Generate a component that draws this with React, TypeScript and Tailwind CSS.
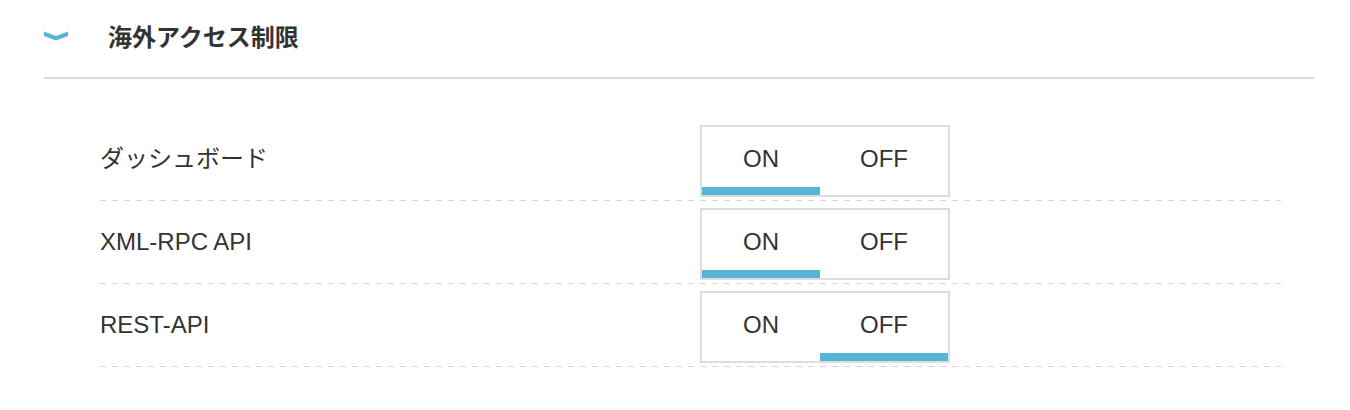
const font = { fontFamily: '"Liberation Sans", "Noto Sans CJK JP", sans-serif' };

type Row = { label: string; on: boolean };

// アクセス制限の行
const rows: Row[] = [
  { label: 'ダッシュボード', on: true },
  { label: 'XML-RPC API', on: true },
  { label: 'REST-API', on: false },
];

function Toggle({ on }: { on: boolean }) {
  return (
    <div className="flex h-[72px] w-[250px] border-2 border-[#dddddd] bg-white">
      <div
        className={
          'flex w-[118px] items-center justify-center border-b-[8px] pt-[4px] text-[24px] leading-none text-[#333333] ' +
          (on ? 'border-[#56b4d4]' : 'border-transparent')
        }
      >
        ON
      </div>
      <div
        className={
          'flex w-[128px] items-center justify-center border-b-[8px] pt-[4px] text-[24px] leading-none text-[#333333] ' +
          (!on ? 'border-[#56b4d4]' : 'border-transparent')
        }
      >
        OFF
      </div>
    </div>
  );
}

export default function App() {
  return (
    <div className="min-h-screen bg-white" style={font}>
      <div className="ml-[44px] w-[1270px]">
        {/* 見出し */}
        <div className="flex h-[79px] items-center border-b-2 border-[#d9d9d9] pb-[2px]">
          <svg width="24" height="10" viewBox="0 0 24 10" className="mb-[4px]">
            <polygon points="0,0.5 12,5 24,0.5 24,5 12,9.5 0,5" fill="#56b4d4" />
          </svg>
          <h2 className="ml-[40px] text-[24px] font-bold text-[#333333]">海外アクセス制限</h2>
        </div>

        {/* 設定行 */}
        <div className="ml-[56px] mr-[33px] pt-[39px]">
          {rows.map((row) => (
            <div key={row.label}>
              <div className="flex items-center pt-[7px] pb-[3px]">
                <div className="w-[600px] pb-[4px] text-[24px] text-[#333333]">{row.label}</div>
                <Toggle on={row.on} />
              </div>
              <div className="h-px bg-[repeating-linear-gradient(90deg,#d6d6d6_0_6px,transparent_6px_12px)]" />
            </div>
          ))}
        </div>
      </div>
    </div>
  );
}
